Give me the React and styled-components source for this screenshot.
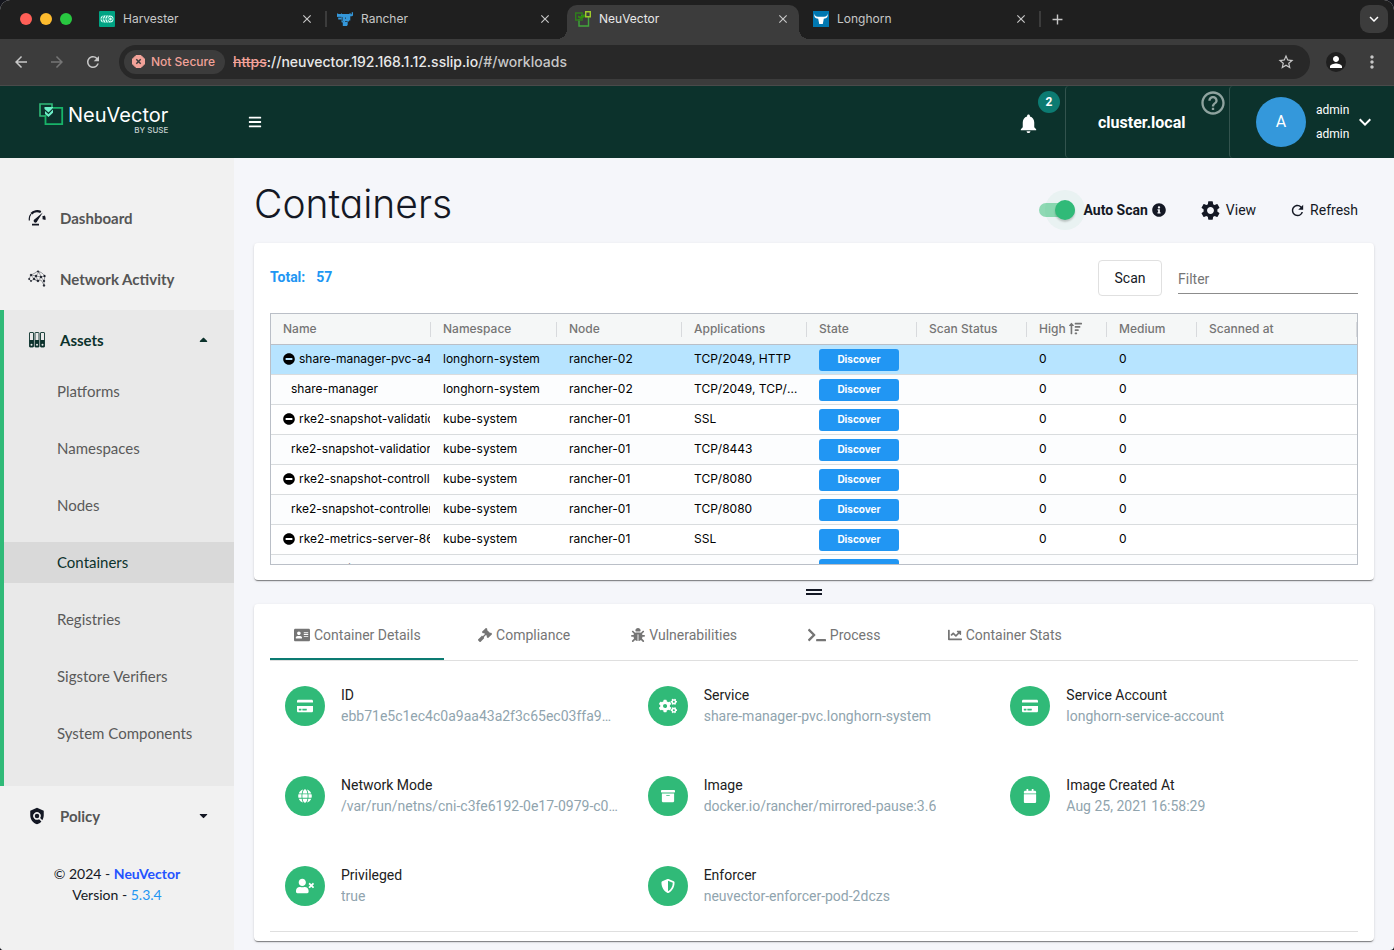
import React from "react";
import styled, { createGlobalStyle, css } from "styled-components";
import {
  MdArrowBack, MdArrowForward, MdRefresh, MdStarBorder, MdPerson, MdMoreVert, MdClose, MdAdd,
  MdNotifications, MdHelpOutline, MdSettings, MdPolicy, MdKeyboardArrowDown,
} from "react-icons/md";
import {
  FaInfoCircle, FaMinusCircle, FaGavel, FaTerminal, FaChartLine, FaCreditCard, FaCogs, FaGlobe, FaBars,
  FaArchive, FaCalendar, FaUserTimes, FaShieldAlt, FaAddressCard, FaSortAmountUp, FaCaretUp, FaCaretDown,
} from "react-icons/fa";
import { FaBug } from "react-icons/fa6";

const roboto = `Roboto, "Liberation Sans", sans-serif`;
const inter = `Inter, "Liberation Sans", sans-serif`;
const lato = `Lato, "Liberation Sans", sans-serif`;
const green = "#30ba78";
const pine = "#0c322c";
const ink = "#141824";

const GlobalStyle = createGlobalStyle`
  *, *::before, *::after { box-sizing: border-box; }
  body { margin: 0; background: #15161d; font-family: ${roboto}; font-size: 14px; color: ${ink}; }
  button, input { font: inherit; color: inherit; }
  button { background: none; border: 0; padding: 0; cursor: pointer; }
  a { color: inherit; text-decoration: none; }
  svg { display: block; flex: none; }
`;

const Window = styled.div`
  min-height: 100vh;
  display: flex;
  flex-direction: column;
  border-radius: 10px 10px 4px 4px;
  overflow: hidden;
  background: #f5f6fa;
`;

/* ---------- browser frame ---------- */

const TabStrip = styled.div`
  display: flex;
  height: 39px;
  padding: 5px 6px 0 20px;
  background: #1f1f1f;
  font-family: ${inter};
`;
const Lights = styled.div`
  display: flex;
  gap: 8px;
  padding-top: 8px;
  width: 71px;
`;
const Light = styled.span`
  width: 12px;
  height: 12px;
  border-radius: 50%;
  background: ${(p) => p.$color};
`;
const BrowserTab = styled.div`
  position: relative;
  display: flex;
  align-items: center;
  gap: 8px;
  flex: 0 1 238px;
  height: 34px;
  padding: 0 14px 6px 8px;
  font-size: 12px;
  line-height: 16px;
  color: #c7c7c7;
  ${(p) => p.$divider && css`
    &::after { content: ""; position: absolute; right: 2px; top: 6px; width: 2px; height: 16px; background: #3c3c3c; }
  `}
  ${(p) => p.$active && css`
    flex-basis: 232px;
    margin-right: 6px;
    padding-right: 8px;
    background: #3c3c3c;
    border-radius: 10px 10px 0 0;
    color: #e8e8e8;
    &::before, &::after { content: ""; position: absolute; bottom: 0; width: 10px; height: 10px; }
    &::before { left: -10px; background: radial-gradient(circle at 0 0, transparent 10px, #3c3c3c 10px); }
    &::after { right: -10px; background: radial-gradient(circle at 100% 0, transparent 10px, #3c3c3c 10px); }
  `}
`;
const TabTitle = styled.span`
  flex: 1;
`;
const IconButton = styled.button`
  display: grid;
  place-items: center;
  flex: none;
  width: ${(p) => p.$size || 16}px;
  height: ${(p) => p.$size || 16}px;
  color: ${(p) => p.$color || "#c7c7c7"};
`;
const NewTab = styled(IconButton)`
  margin: 6px 0 0 6px;
`;
const TabSearch = styled(IconButton)`
  margin-left: auto;
  border-radius: 9px;
  background: #3c3c3c;
`;
const Toolbar = styled.div`
  display: flex;
  align-items: center;
  height: 47px;
  padding: 0 12px 1px;
  background: #3c3c3c;
  border-bottom: 1px solid #4a4a4a;
  font-family: ${inter};
`;
const NavButtons = styled.div`
  display: flex;
  gap: 18px;
  width: 107px;
`;
const AddressBar = styled.div`
  flex: 1;
  display: flex;
  align-items: center;
  height: 34px;
  padding: 0 14px 0 5px;
  border-radius: 17px;
  background: #282828;
`;
const NotSecure = styled.button`
  display: flex;
  align-items: center;
  gap: 6px;
  height: 24px;
  padding: 0 10px 0 8px;
  border-radius: 12px;
  background: #3c3c3c;
  color: #f2a299;
  font-size: 12px;
  font-weight: 500;
`;
const Url = styled.span`
  flex: 1;
  margin-left: 8px;
  font-size: 14px;
  font-weight: 500;
  color: #c7c7c7;
  b { font-weight: 500; color: #e8e8e8; }
  s { color: #f2a299; }
`;
const ProfileButton = styled(IconButton)`
  margin: 0 16px;
  border-radius: 50%;
  background: #1f1f1f;
`;

/* ---------- application header ---------- */

const Header = styled.header`
  display: flex;
  align-items: stretch;
  height: 72px;
  background: ${pine};
  color: #fff;
`;
const Brand = styled.a`
  display: flex;
  align-items: flex-start;
  gap: 4px;
  width: 234px;
  padding: 17px 0 0 39px;
`;
const BrandName = styled.span`
  display: flex;
  flex-direction: column;
  align-items: flex-end;
  font-family: ${inter};
  font-size: 20px;
  line-height: 24px;
  small { font-size: 8px; line-height: 6px; font-weight: 500; color: #c3cfcd; }
`;
const MenuButton = styled(IconButton)`
  align-self: center;
  margin-left: 13px;
`;
const HeaderRight = styled.div`
  display: flex;
  margin-left: auto;
`;
const Bell = styled.button`
  position: relative;
  width: 46px;
  padding: 2px 0 0 4px;
  margin-right: 6px;
  color: #fff;
`;
const Badge = styled.span`
  position: absolute;
  top: 5px;
  right: -1px;
  width: 22px;
  height: 22px;
  border-radius: 50%;
  background: #0c7b72;
  font-size: 12px;
  font-weight: 700;
  line-height: 22px;
  text-align: center;
`;
const Cluster = styled.div`
  position: relative;
  width: 164px;
  padding-left: 32px;
  border-left: 1px solid #33534e;
  border-radius: 4px 0 0 4px;
  font-size: 16px;
  font-weight: 700;
  line-height: 74px;
`;
const Help = styled(IconButton)`
  position: absolute;
  top: 3px;
  right: 2px;
`;
const Account = styled.button`
  display: flex;
  align-items: center;
  width: 165px;
  padding-left: 26px;
  border-left: 1px solid #33534e;
  border-radius: 4px 0 0 4px;
  color: #fff;
`;
const Avatar = styled.span`
  width: 50px;
  height: 50px;
  margin-right: 10px;
  border-radius: 50%;
  background: #3498db;
  font-size: 16px;
  line-height: 50px;
`;
const AccountNames = styled.span`
  display: flex;
  flex-direction: column;
  margin-right: 4px;
  font-size: 12px;
  line-height: 24px;
`;

/* ---------- side navigation ---------- */

const Body = styled.div`
  flex: 1;
  display: flex;
`;
const Sidebar = styled.nav`
  flex: none;
  width: 234px;
  padding-top: 30px;
  background: #f1f1f1;
  font-family: ${lato};
`;
const NavItem = styled.a`
  display: flex;
  align-items: center;
  height: 61px;
  padding: 0 24px 2px 28px;
  font-size: 15px;
  font-weight: 700;
  color: ${(p) => (p.$current ? pine : "#555")};
  > span { flex: 1; margin-left: 14px; }
`;
const NavGroup = styled.div`
  padding-bottom: 32px;
  border-left: 4px solid ${green};
  background: #e9e9e9;
  ${NavItem} { padding-left: 24px; }
`;
const SubList = styled.ul`
  display: flex;
  flex-direction: column;
  gap: 16px;
  margin: 0;
  padding: 0;
  list-style: none;
`;
const SubItem = styled.a`
  display: block;
  padding-left: 53px;
  font-size: 15px;
  line-height: 41px;
  color: ${(p) => (p.$current ? pine : "#5a5a5a")};
  background: ${(p) => (p.$current ? "#d9d9d9" : "transparent")};
`;
const Copyright = styled.p`
  margin: 16px 0 0;
  font-size: 14px;
  line-height: 21px;
  text-align: center;
  a { font-weight: 700; color: #2453ff; }
  span { color: #2196f3; }
`;

/* ---------- page ---------- */

const Main = styled.main`
  flex: 1;
  min-width: 0;
  padding: 22px 20px 8px;
`;
const PageHead = styled.div`
  display: flex;
  align-items: center;
  height: 63px;
  padding: 0 16px 13px 0;
  h1 { flex: 1; margin: 0; padding-bottom: 2px; font: 300 39px/48px ${inter}; font-feature-settings: "cv11"; }
`;
const SwitchLabel = styled.label`
  display: flex;
  align-items: center;
  gap: 8px;
  font-weight: 700;
  padding-top: 10px;
`;
const Switch = styled.input`
  appearance: none;
  position: relative;
  width: 36px;
  height: 14px;
  margin: 0;
  border-radius: 7px;
  background: #8fd9b4;
  &::before {
    content: "";
    position: absolute;
    top: -3px;
    right: 0;
    width: 20px;
    height: 20px;
    border-radius: 50%;
    background: ${green};
    box-shadow: 0 0 0 10px rgba(48, 186, 120, 0.06), 0 2px 2px rgba(0, 0, 0, 0.2);
  }
`;
const HeadInfo = styled.span`
  margin-left: 4px;
  padding-top: 10px;
`;
const HeadAction = styled.button`
  display: flex;
  align-items: center;
  gap: 4px;
  margin-left: 33px;
  padding-top: 10px;
`;
const Card = styled.section`
  padding: ${(p) => p.$pad};
  border-radius: 4px;
  background: #fff;
  box-shadow: 0 2px 1px -1px rgba(0, 0, 0, 0.35), 0 1px 1px rgba(0, 0, 0, 0.14), 0 1px 3px rgba(0, 0, 0, 0.12);
`;
const ListBar = styled.div`
  display: flex;
  align-items: center;
  gap: 16px;
  height: 36px;
  margin-bottom: 17px;
`;
const Total = styled.div`
  flex: 1;
  display: flex;
  gap: 11px;
  padding-bottom: 2px;
  font-weight: 700;
  color: #2196f3;
`;
const ScanButton = styled.button`
  width: 64px;
  height: 36px;
  border: 1px solid #e0e0e0;
  border-radius: 4px;
`;
const FilterInput = styled.input`
  width: 180px;
  height: 32px;
  padding: 2px 0 0;
  border: 0;
  border-bottom: 1px solid #8c8c8c;
  background: none;
  outline: none;
  &::placeholder { color: #757575; opacity: 1; }
`;
const GridFrame = styled.div`
  height: 252px;
  border: 1px solid #babfc7;
  overflow: hidden;
`;
const Grid = styled.table`
  width: 100%;
  table-layout: fixed;
  border-collapse: separate;
  border-spacing: 0;
  font-family: ${inter};
  font-size: 12px;
`;
const HeadCell = styled.th`
  height: 31px;
  padding: 0;
  border-bottom: 1px solid #babfc7;
  background: #f5f7f7;
  font-weight: 500;
  text-align: left;
  color: #757575;
  > div {
    display: flex;
    align-items: center;
    gap: 3px;
    height: 15px;
    padding: 0 0 2px 12px;
    border-right: 1px solid #d8dadd;
  }
`;
const Row = styled.tr`
  background: ${(p) => (p.$selected ? "#b7e4ff" : p.$odd ? "#fcfdfe" : "#fff")};
`;
const Cell = styled.td`
  height: 30px;
  padding: 0 8px 2px 12px;
  border-bottom: 1px solid #d9dcde;
  color: #000;
  line-height: 26px;
  white-space: nowrap;
  overflow: hidden;
  text-overflow: ellipsis;
`;
const NameCell = styled(Cell)`
  padding: 0 1px 2px ${(p) => (p.$child ? 20 : 12)}px;
  text-overflow: clip;
  > div { display: flex; align-items: center; gap: 4px; overflow: hidden; }
`;
const StateTag = styled.span`
  display: block;
  width: 80px;
  height: 22px;
  margin-top: 2px;
  border-radius: 3px;
  background: #2196f3;
  color: #fff;
  font-size: 10px;
  font-weight: 700;
  line-height: 21px;
  text-align: center;
`;
const Splitter = styled.div`
  display: flex;
  flex-direction: column;
  align-items: center;
  gap: 2px;
  height: 24px;
  padding-top: 9px;
  span { width: 16px; height: 2px; background: ${ink}; }
`;
const Tabs = styled.div`
  display: flex;
  height: 57px;
  border-bottom: 1px solid #dfdfdf;
`;
const Tab = styled.button`
  display: flex;
  align-items: center;
  justify-content: center;
  gap: 4px;
  min-width: 160px;
  padding: 8px 23px 0 24px;
  color: #757575;
  border-bottom: 2px solid ${(p) => (p.$active ? "#0c7b72" : "transparent")};
`;
const Details = styled.dl`
  display: grid;
  grid-template-columns: repeat(3, minmax(0, 1fr));
  grid-auto-rows: 65px;
  row-gap: 25px;
  margin: 0;
  padding-top: 25px;
  border-bottom: 1px solid #dfdfdf;
`;
const Detail = styled.div`
  display: flex;
  gap: 16px;
  padding: 0 14px 0 15px;
`;
const Disc = styled.span`
  display: grid;
  place-items: center;
  flex: none;
  width: 40px;
  height: 40px;
  border-radius: 50%;
  background: ${green};
  color: #fff;
`;
const DetailText = styled.div`
  min-width: 0;
  line-height: 21px;
  dt { margin-top: -1px; color: #212121; }
  dd { margin: 0; color: #90a4ae; white-space: nowrap; overflow: hidden; text-overflow: ellipsis; }
`;

/* ---------- drawings ---------- */

const HarvesterIcon = () => (
  <svg width="16" height="16" viewBox="0 0 16 16">
    <rect width="16" height="16" rx="1" fill="#00a383" />
    <rect x="1.5" y="4.5" width="13" height="7" rx="3.5" fill="#d8fff6" />
    <path d="M4.5 4.5 3 8l1.500 3.500M7 4.500 5.500 8 7 11.500M9.500 4.500 8 8l1.500 3.500" fill="none" stroke="#00a383" strokeWidth="0.900" />
    <path d="M1.500 8h8" stroke="#00a383" strokeWidth="0.700" />
    <circle cx="11.500" cy="8" r="1.800" fill="none" stroke="#00a383" strokeWidth="0.900" />
  </svg>
);
const RancherIcon = () => (
  <svg width="16" height="16" viewBox="0 0 16 16">
    <path d="M0 2.500h1.200V3H4v-.5h1V3h7.500v-.7h1.200v.9h1V1.300H16v3.200l-1 .8h-1.700v4.200H12v1H10.700v3.200L10 15H5.800V11.500L4.500 11.300V8.500H1.200V6.300L0 5.800z" fill="#3497da" />
    <path d="M1 6.300h3.300M5.200 6v3.500l1 1M8 10.500h2.500M8.500 6.500v1.300" fill="none" stroke="#1f1f1f" strokeWidth="0.700" />
  </svg>
);
const NeuVectorIcon = () => (
  <svg width="16" height="16" viewBox="0 0 16 16" fill="none">
    <path d="M4 8v7h9.500V7M13.500 6v2M6 4.500h4" stroke="#41a63b" strokeWidth="1.400" />
    <path d="M.7 2h6.500v7H.7z" stroke="#2f7d1c" strokeWidth="1.400" />
    <path d="M3 4.500l2 1 5-2v2.500L5.500 8 3 6.500z" fill="#2f8f0e" />
    <path d="M10.700.7h4.600v5h-4.600z" stroke="#9fca2c" strokeWidth="1.400" />
  </svg>
);
const LonghornIcon = () => (
  <svg width="16" height="16" viewBox="0 0 16 16">
    <rect width="16" height="16" fill="#0077b0" />
    <path d="M1.500 2.500c0 2 1 3 3.500 3.200h6c2.500-.2 3.500-1.200 3.500-3.200.7 3-.5 5-3.700 5.200L9.800 13H6.200L5.200 7.700C2 7.500.8 5.500 1.500 2.500z" fill="#fff" />
  </svg>
);
const NeuVectorLogo = () => (
  <svg width="25" height="23" viewBox="0 0 25 23" fill="none">
    <path d="M6 13H1V1h12v3" stroke={green} strokeWidth="1.600" />
    <path d="M14 4.800h9.200v16.400H6.500V12" stroke="#18b368" strokeWidth="1.800" />
    <path d="M5.500 4h8.500v1L9.500 9.500 5.500 6z" fill="#6df0c8" />
    <path d="M6 8l3.500 3.300L14 6.500v3.300L9.500 14 6 11z" fill="#6df0c8" />
  </svg>
);
const WarningIcon = () => (
  <svg width="13" height="13" viewBox="0 0 13 13">
    <path d="M4 .5h5L12.500 4v5L9 12.500H4L.5 9V4z" fill="#f2a299" stroke="#f2a299" strokeLinejoin="round" />
    <path d="M4.300 4.300l4.400 4.400M8.700 4.300 4.300 8.700" stroke="#3c3c3c" strokeWidth="1.500" />
  </svg>
);
const GaugeIcon = () => (
  <svg width="18" height="18" viewBox="0 0 18 18" fill="none">
    <path d="M1.300 11.500V9.500A7.500 7 0 0 1 3 5.200" stroke={ink} strokeWidth="1.200" />
    <path d="M3.300 4.800A7.600 7 0 0 1 12.800 3" stroke={ink} strokeWidth="2.400" />
    <path d="M14.300 7.200 17 6.500q.8 2 .5 4.500l-3-.8q.3-1.500-.2-3z" fill={ink} />
    <path d="M14.800 3.500 9.200 12.200a1.800 1.800 0 1 1-2.500-2z" fill={ink} />
    <path d="M4 15.700h7" stroke={ink} strokeWidth="1.800" />
  </svg>
);
const MeshIcon = () => (
  <svg width="18" height="18" viewBox="0 0 18 18" fill={ink} stroke={ink} strokeWidth="0.400">
    <path d="M1 9l2-4 4-2 3-2 4 2 3 3-1 5v4l-3-5-4 1-3-2-3 2zM3 5l5 1 3-4 2 5 4-1M8 6l-2 3 4 2 3-4 3 4M3 5l3 4M10 11 8 6l5 1" fill="none" />
    <circle cx="1.200" cy="9" r="0.800" /><circle cx="3" cy="5" r="0.900" /><circle cx="10" cy="1.500" r="0.800" />
    <circle cx="8" cy="6" r="1" /><circle cx="6" cy="9" r="0.900" /><circle cx="13" cy="7" r="1" />
    <circle cx="16.500" cy="6" r="0.900" /><circle cx="16" cy="11" r="0.900" /><circle cx="16" cy="15.500" r="0.900" />
    <circle cx="10" cy="11" r="0.900" /><circle cx="3" cy="11" r="0.700" />
  </svg>
);
const BindersIcon = () => (
  <svg width="18" height="18" viewBox="0 0 18 18">
    {[1.500, 7, 12.500].map((x) => (
      <g key={x}>
        <rect x={x} y="1.500" width="4" height="14.500" rx="0.500" fill="none" stroke={pine} strokeWidth="0.900" />
        <path d={`M${x} 9h4v7h-4z`} fill={pine} />
        <circle cx={x + 2} cy="13.800" r="1" fill="#e9e9e9" />
      </g>
    ))}
  </svg>
);

/* ---------- data ---------- */

const browserTabs = [
  { title: "Harvester", Icon: HarvesterIcon, divider: true },
  { title: "Rancher", Icon: RancherIcon },
  { title: "NeuVector", Icon: NeuVectorIcon, active: true },
  { title: "Longhorn", Icon: LonghornIcon, divider: true },
];
const assetPages = ["Platforms", "Namespaces", "Nodes", "Containers", "Registries", "Sigstore Verifiers", "System Components"];
const columns = [
  ["Name", 160], ["Namespace", 126], ["Node", 125], ["Applications", 125], ["State", 110],
  ["Scan Status", 110], ["High", 80], ["Medium", 90], ["Scanned at"],
];
const rows = [
  ["share-manager-pvc-a4", "longhorn-system", "rancher-02", "TCP/2049, HTTP"],
  ["share-manager", "longhorn-system", "rancher-02", "TCP/2049, TCP/9500"],
  ["rke2-snapshot-validation", "kube-system", "rancher-01", "SSL"],
  ["rke2-snapshot-validation", "kube-system", "rancher-01", "TCP/8443"],
  ["rke2-snapshot-controller", "kube-system", "rancher-01", "TCP/8080"],
  ["rke2-snapshot-controller", "kube-system", "rancher-01", "TCP/8080"],
  ["rke2-metrics-server-86", "kube-system", "rancher-01", "SSL"],
  ["rke2-metrics-server", "kube-system", "rancher-01", "TCP/10250"],
];
const detailTabs = [
  ["Container Details", FaAddressCard, 16],
  ["Compliance", FaGavel, 14],
  ["Vulnerabilities", FaBug, 14],
  ["Process", FaTerminal, 18],
  ["Container Stats", FaChartLine, 14],
];
const details = [
  ["ID", "ebb71e5c1ec4c0a9aa43a2f3c65ec03ffa9d0b7c21e4", FaCreditCard, 16],
  ["Service", "share-manager-pvc.longhorn-system", FaCogs, 18],
  ["Service Account", "longhorn-service-account", FaCreditCard, 16],
  ["Network Mode", "/var/run/netns/cni-c3fe6192-0e17-0979-c0a1-5d72", FaGlobe, 14],
  ["Image", "docker.io/rancher/mirrored-pause:3.6", FaArchive, 14],
  ["Image Created At", "Aug 25, 2021 16:58:29", FaCalendar, 14],
  ["Privileged", "true", FaUserTimes, 18],
  ["Enforcer", "neuvector-enforcer-pod-2dczs", FaShieldAlt, 14],
];

function BrowserFrame() {
  return (
    <>
      <TabStrip>
        <Lights>
          <Light $color="#ff5f57" />
          <Light $color="#febc2e" />
          <Light $color="#28c840" />
        </Lights>
        {browserTabs.map(({ title, Icon, active, divider }) => (
          <BrowserTab key={title} $active={active} $divider={divider}>
            <Icon />
            <TabTitle>{title}</TabTitle>
            <IconButton aria-label={`Close ${title}`}><MdClose size={14} /></IconButton>
          </BrowserTab>
        ))}
        <NewTab aria-label="New tab"><MdAdd size={17} /></NewTab>
        <TabSearch aria-label="Search tabs" $size={28} $color="#fff"><MdKeyboardArrowDown size={18} /></TabSearch>
      </TabStrip>
      <Toolbar>
        <NavButtons>
          <IconButton aria-label="Back" $size={18}><MdArrowBack size={18} /></IconButton>
          <IconButton aria-label="Forward" $size={18} $color="#757575"><MdArrowForward size={18} /></IconButton>
          <IconButton aria-label="Reload" $size={18}><MdRefresh size={18} /></IconButton>
        </NavButtons>
        <AddressBar>
          <NotSecure><WarningIcon />Not Secure</NotSecure>
          <Url><s>https</s><b>://neuvector.192.168.1.12.sslip.io</b>/#/workloads</Url>
          <IconButton aria-label="Bookmark" $size={20}><MdStarBorder size={18} /></IconButton>
        </AddressBar>
        <ProfileButton aria-label="Profile" $size={20} $color="#fff"><MdPerson size={18} /></ProfileButton>
        <IconButton aria-label="More" $size={20}><MdMoreVert size={20} /></IconButton>
      </Toolbar>
    </>
  );
}

function AppHeader() {
  return (
    <Header>
      <Brand href="#/">
        <NeuVectorLogo />
        <BrandName>NeuVector<small>BY SUSE</small></BrandName>
      </Brand>
      <MenuButton aria-label="Toggle menu" $color="#fff"><FaBars size={14} /></MenuButton>
      <HeaderRight>
        <Bell aria-label="Notifications">
          <MdNotifications size={23} />
          <Badge>2</Badge>
        </Bell>
        <Cluster>
          cluster.local
          <Help aria-label="Help" $size={28} $color="#8fa39f"><MdHelpOutline size={28} /></Help>
        </Cluster>
        <Account>
          <Avatar>A</Avatar>
          <AccountNames><span>admin</span><span>admin</span></AccountNames>
          <MdKeyboardArrowDown size={24} />
        </Account>
      </HeaderRight>
    </Header>
  );
}

function SideNav() {
  return (
    <Sidebar>
      <NavItem href="#/dashboard"><GaugeIcon /><span>Dashboard</span></NavItem>
      <NavItem href="#/graph"><MeshIcon /><span>Network Activity</span></NavItem>
      <NavGroup>
        <NavItem href="#/assets" $current><BindersIcon /><span>Assets</span><FaCaretUp size={13} /></NavItem>
        <SubList>
          {assetPages.map((name) => (
            <li key={name}><SubItem href="#/workloads" $current={name === "Containers"}>{name}</SubItem></li>
          ))}
        </SubList>
      </NavGroup>
      <NavItem href="#/policy"><MdPolicy size={18} color={ink} /><span>Policy</span><FaCaretDown size={13} color={ink} /></NavItem>
      <Copyright>
        © 2024 - <a href="#/about">NeuVector</a><br />
        Version - <span>5.3.4</span>
      </Copyright>
    </Sidebar>
  );
}

function ContainerTable() {
  return (
    <GridFrame>
      <Grid>
        <colgroup>
          {columns.map(([name, width]) => <col key={name} width={width} />)}
        </colgroup>
        <thead>
          <tr>
            {columns.map(([name]) => (
              <HeadCell key={name}><div>{name}{name === "High" && <FaSortAmountUp size={13} />}</div></HeadCell>
            ))}
          </tr>
        </thead>
        <tbody>
          {rows.map(([name, namespace, node, apps], i) => (
            <Row key={i} $selected={i === 0} $odd={i % 2 === 1}>
              <NameCell $child={i % 2 === 1}>
                <div>{i % 2 === 0 && <FaMinusCircle size={12} />}{name}</div>
              </NameCell>
              <Cell>{namespace}</Cell>
              <Cell>{node}</Cell>
              <Cell>{apps}</Cell>
              <Cell><StateTag>Discover</StateTag></Cell>
              <Cell />
              <Cell>0</Cell>
              <Cell>0</Cell>
              <Cell />
            </Row>
          ))}
        </tbody>
      </Grid>
    </GridFrame>
  );
}

export default function App() {
  return (
    <Window>
      <GlobalStyle />
      <BrowserFrame />
      <AppHeader />
      <Body>
        <SideNav />
        <Main>
          <PageHead>
            <h1>Containers</h1>
            <SwitchLabel>
              <Switch type="checkbox" defaultChecked />
              <span>Auto Scan</span>
            </SwitchLabel>
            <HeadInfo><FaInfoCircle size={14} /></HeadInfo>
            <HeadAction><MdSettings size={23} />View</HeadAction>
            <HeadAction><MdRefresh size={17} />Refresh</HeadAction>
          </PageHead>
          <Card $pad="17px 16px 15px">
            <ListBar>
              <Total><span>Total:</span><span>57</span></Total>
              <ScanButton>Scan</ScanButton>
              <FilterInput aria-label="Filter" placeholder="Filter" />
            </ListBar>
            <ContainerTable />
          </Card>
          <Splitter><span /><span /></Splitter>
          <Card $pad="0 16px 9px">
            <Tabs role="tablist">
              {detailTabs.map(([label, Icon, size], i) => (
                <Tab key={label} role="tab" aria-selected={i === 0} $active={i === 0}><Icon size={size} />{label}</Tab>
              ))}
            </Tabs>
            <Details>
              {details.map(([label, value, Icon, size]) => (
                <Detail key={label}>
                  <Disc><Icon size={size} /></Disc>
                  <DetailText><dt>{label}</dt><dd>{value}</dd></DetailText>
                </Detail>
              ))}
            </Details>
          </Card>
        </Main>
      </Body>
    </Window>
  );
}
